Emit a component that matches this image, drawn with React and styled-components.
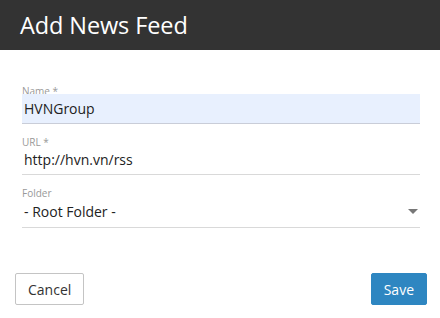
import React from 'react';
import styled, { createGlobalStyle } from 'styled-components';

const GlobalStyle = createGlobalStyle`
  html, body {
    margin: 0;
    padding: 0;
    background: #fff;
    font-family: 'Open Sans', 'Noto Sans', sans-serif;
  }
`;

const Dialog = styled.div`
  width: 440px;
  height: 318px;
  display: flex;
  flex-direction: column;
  background: #fff;
`;

const Header = styled.div`
  height: 50px;
  background: #333333;
  display: flex;
  align-items: center;
  padding: 0 20px;
  box-sizing: border-box;
`;

const Title = styled.h1`
  margin: 0;
  color: #fff;
  font-size: 23.5px;
  font-weight: 400;
  letter-spacing: -0.1px;
`;

const Body = styled.div`
  display: flex;
  flex-direction: column;
  gap: 12px;
  padding: 35px 20px 0 22px;
`;

const Field = styled.div`
  display: flex;
  flex-direction: column;
`;

const Label = styled.label`
  font-size: 10px;
  color: #999;
  line-height: 12px;
  height: 9px;
`;

const Input = styled.input`
  border: none;
  border-bottom: 1px solid ${p => (p.filled ? '#c9cdd8' : '#d9d9d9')};
  background: ${p => (p.filled ? '#e8f0fe' : 'transparent')};
  height: 30px;
  padding: 0 2px;
  font-family: inherit;
  font-size: 14px;
  color: #222;
  outline: none;
  box-sizing: border-box;
`;

const Select = styled.div`
  height: 32px;
  border-bottom: 1px solid #d9d9d9;
  display: flex;
  align-items: center;
  justify-content: space-between;
  padding: 0 2px;
  font-size: 14px;
  color: #222;
  box-sizing: border-box;
`;

const Caret = styled.span`
  width: 0;
  height: 0;
  border-left: 5px solid transparent;
  border-right: 5px solid transparent;
  border-top: 5px solid #777;
  margin-right: 0;
`;

const Footer = styled.div`
  margin-top: auto;
  display: flex;
  justify-content: space-between;
  padding: 0 13px 13px 15px;
`;

const Button = styled.button`
  height: 32px;
  padding: 0 ${p => (p.primary ? '12px' : '12px')};
  border-radius: 2px;
  font-family: inherit;
  font-size: 14px;
  cursor: pointer;
  border: 1px solid ${p => (p.primary ? '#2e86c1' : '#c4c4c4')};
  background: ${p => (p.primary ? '#2e86c1' : '#fff')};
  color: ${p => (p.primary ? '#fff' : '#333')};
`;

export default function App() {
  return (
    <>
      <GlobalStyle />
      <Dialog>
        <Header>
          <Title>Add News Feed</Title>
        </Header>
        <Body>
          <Field>
            <Label>Name *</Label>
            <Input filled defaultValue="HVNGroup" />
          </Field>
          <Field>
            <Label>URL *</Label>
            <Input defaultValue="http://hvn.vn/rss" />
          </Field>
          <Field>
            <Label>Folder</Label>
            <Select>
              <span>- Root Folder -</span>
              <Caret />
            </Select>
          </Field>
        </Body>
        <Footer>
          <Button>Cancel</Button>
          <Button primary>Save</Button>
        </Footer>
      </Dialog>
    </>
  );
}
